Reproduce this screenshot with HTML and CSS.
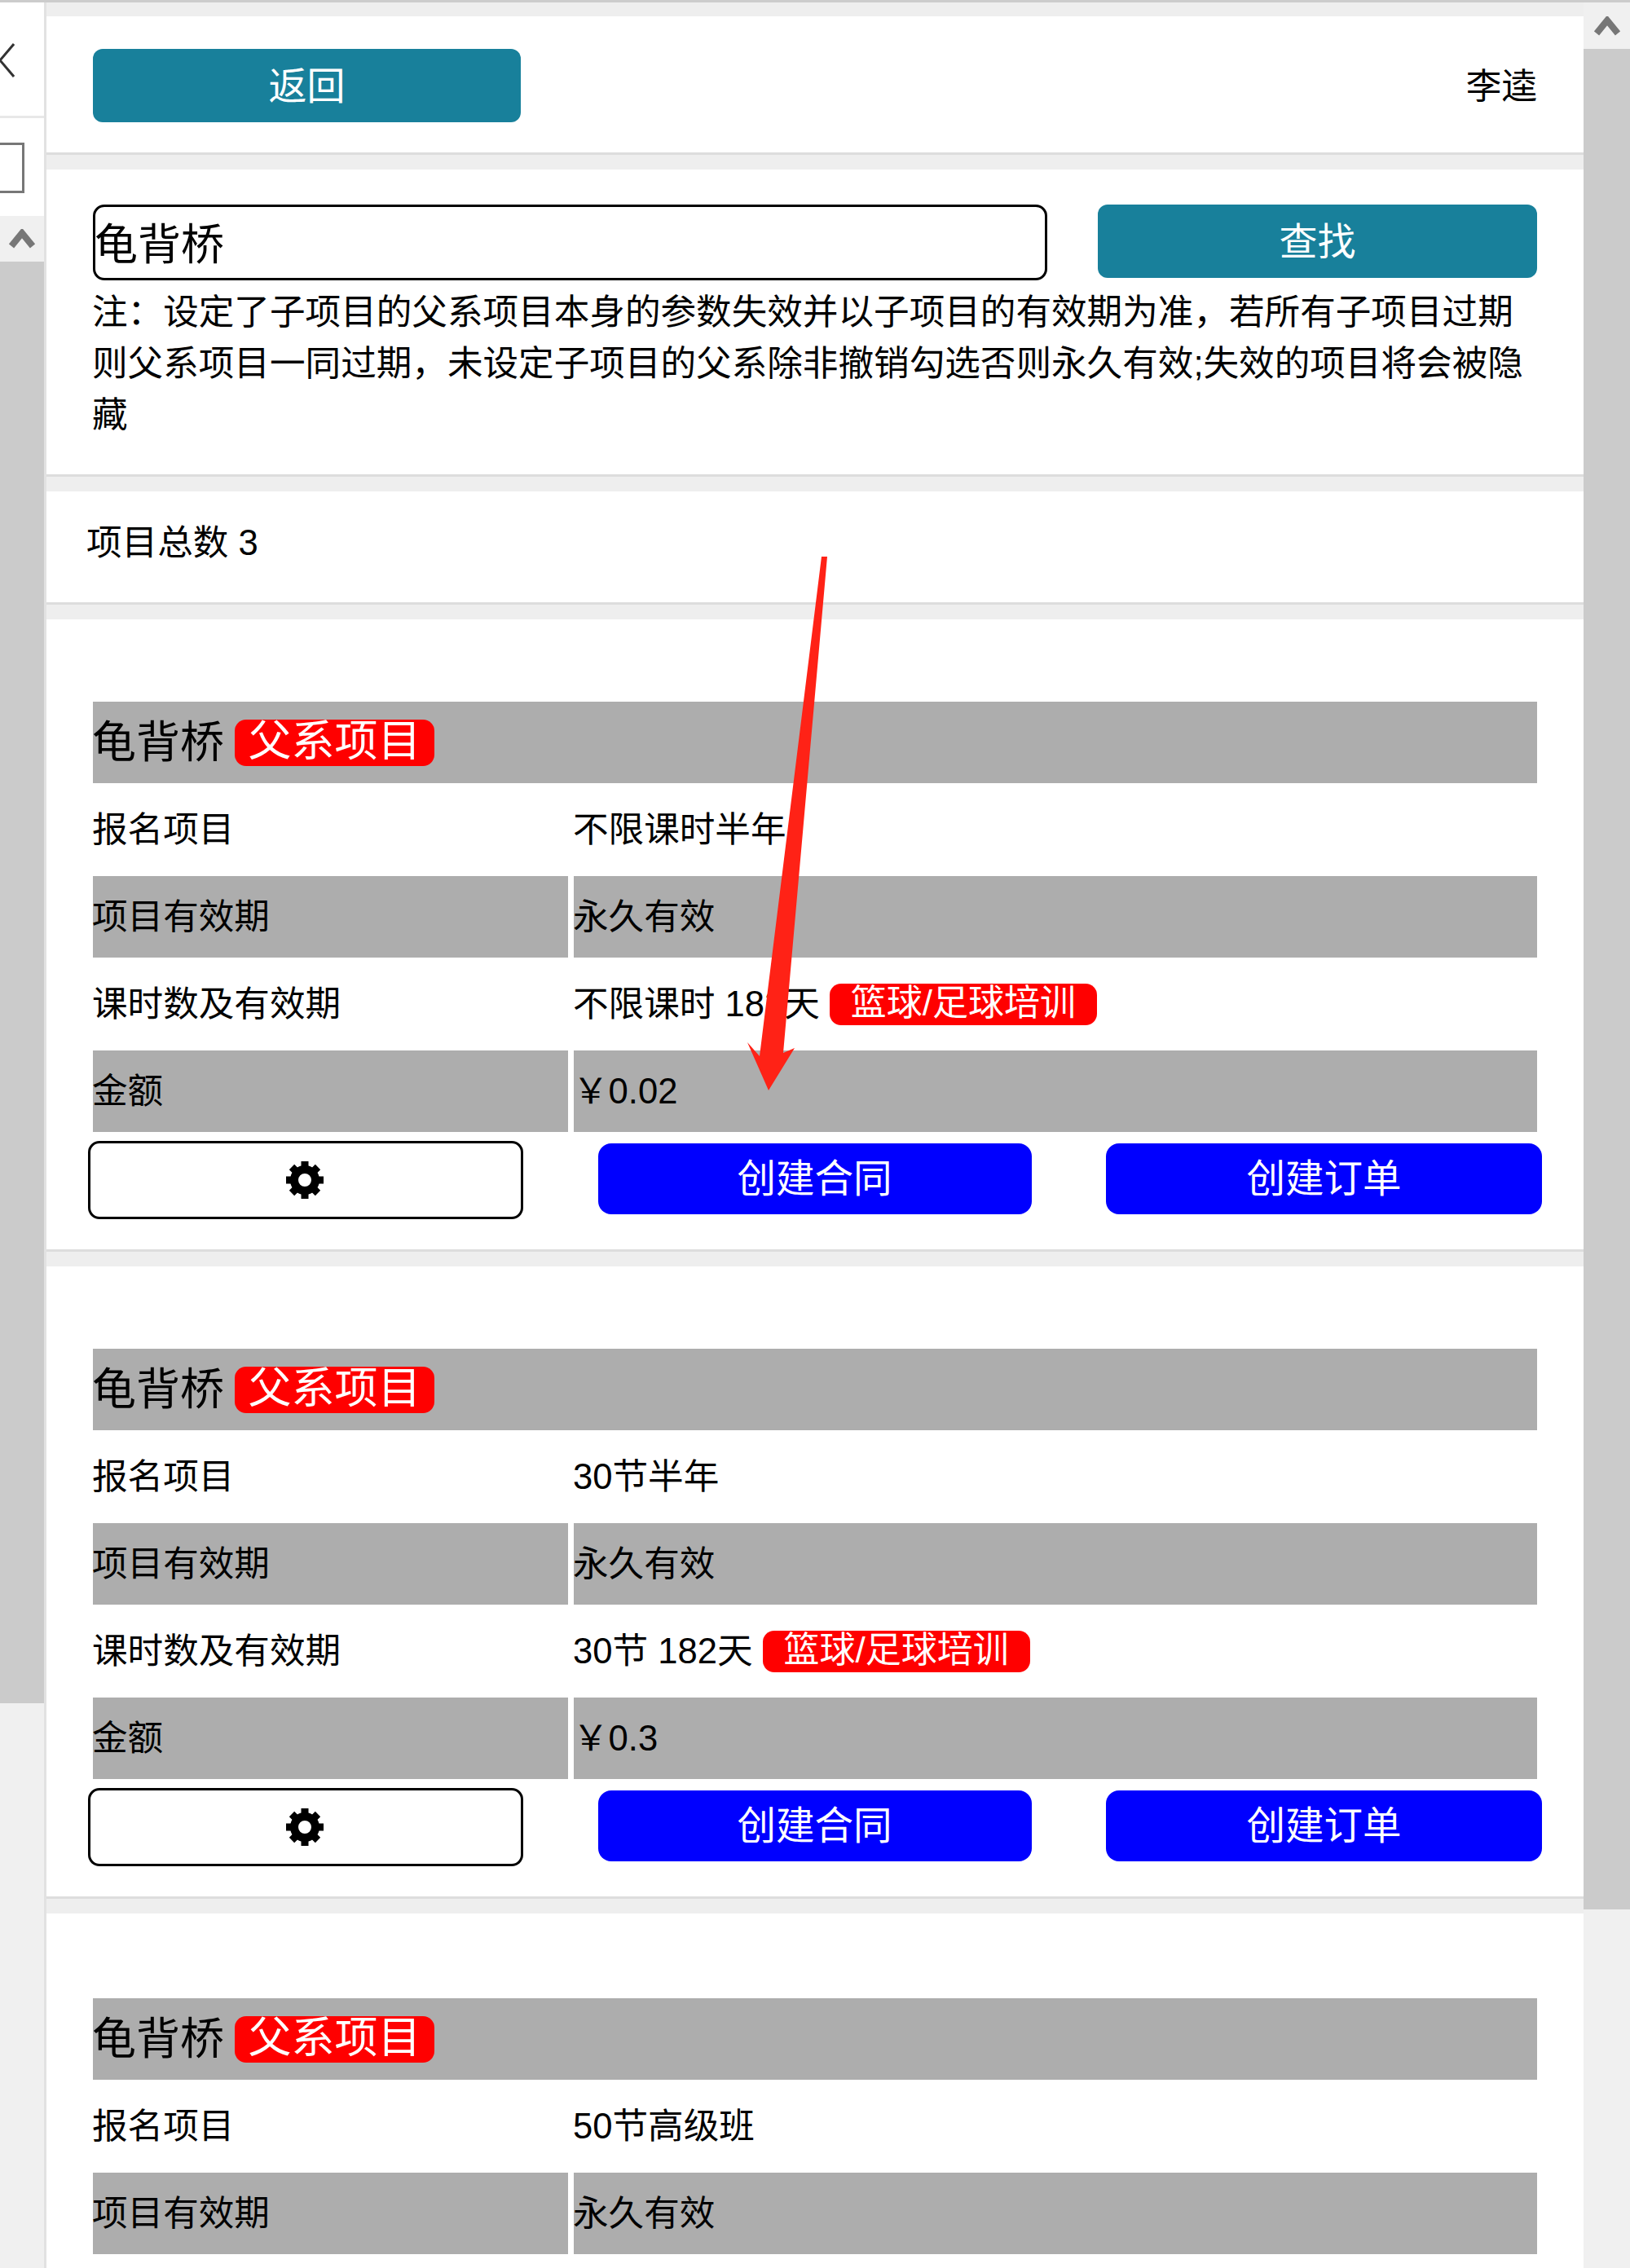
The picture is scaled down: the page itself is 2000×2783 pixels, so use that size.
FILE: index.html
```html
<!DOCTYPE html>
<html lang="zh-CN">
<head>
    <meta charset="UTF-8">
    <meta name="viewport" content="width=device-width, initial-scale=1.0">
    <title>项目列表</title>
    <link rel="stylesheet" href="styles.css">
</head>
<body>
    <div class="top-line"></div>
    <div class="window">
        <div class="side">
            <div class="side-head">
                <svg class="side-back" width="18" height="42" viewBox="0 0 18 42"><path d="M17 1 L0 21 L17 41" fill="none" stroke="#333" stroke-width="3"/></svg>
            </div>
            <div class="side-search"><div class="side-input"></div></div>
            <div class="scrollbar">
                <div class="scroll-up">
                    <svg width="32" height="24" viewBox="0 0 32 24"><path d="M3 21 L16 5 L29 21" fill="none" stroke="#777" stroke-width="8"/></svg>
                </div>
                <div class="scroll-thumb side-thumb"></div>
                <div class="scroll-track"></div>
            </div>
        </div>

        <div class="main">
            <div class="panel header">
                <button class="btn-teal btn-back"><span class="btn-text">返回</span></button>
                <span class="user">李逵</span>
            </div>

            <div class="panel search">
                <div class="search-row">
                    <input class="search-input" type="text" value="龟背桥">
                    <button class="btn-teal btn-find"><span class="btn-text">查找</span></button>
                </div>
                <div class="note">注&#xFF1A;设定了子项目的父系项目本身的参数失效并以子项目的有效期为准&#xFF0C;若所有子项目过期则父系项目一同过期&#xFF0C;未设定子项目的父系除非撤销勾选否则永久有效;失效的项目将会被隐藏</div>
            </div>

            <div class="panel total">项目总数 3</div>

            <div class="panel card">
                <div class="info">
                    <div class="cell title grey">龟背桥 <span class="tag tag-big">父系项目</span></div>
                    <div class="cell">报名项目</div>
                    <div class="cell">不限课时半年</div>
                    <div class="cell grey">项目有效期</div>
                    <div class="cell grey">永久有效</div>
                    <div class="cell">课时数及有效期</div>
                    <div class="cell">不限课时 182天 <span class="tag">篮球/足球培训</span></div>
                    <div class="cell grey">金额</div>
                    <div class="cell grey">&#xFFE5;0.02</div>
                </div>
                <div class="actions">
                    <button class="btn-gear">
                        <svg width="48" height="48" viewBox="-24 -24 48 48"><circle r="13" fill="none" stroke="#000" stroke-width="10"/><path d="M0-23V-14M0 23V14M-23 0H-14M23 0H14M-16-16L-10-10M16 16L10 10M-16 16L-10 10M16-16L10-10" stroke="#000" stroke-width="9"/></svg>
                    </button>
                    <button class="btn-blue btn-contract"><span class="btn-text">创建合同</span></button>
                    <button class="btn-blue btn-order"><span class="btn-text">创建订单</span></button>
                </div>
            </div>

            <div class="panel card">
                <div class="info">
                    <div class="cell title grey">龟背桥 <span class="tag tag-big">父系项目</span></div>
                    <div class="cell">报名项目</div>
                    <div class="cell">30节半年</div>
                    <div class="cell grey">项目有效期</div>
                    <div class="cell grey">永久有效</div>
                    <div class="cell">课时数及有效期</div>
                    <div class="cell">30节 182天 <span class="tag">篮球/足球培训</span></div>
                    <div class="cell grey">金额</div>
                    <div class="cell grey">&#xFFE5;0.3</div>
                </div>
                <div class="actions">
                    <button class="btn-gear">
                        <svg width="48" height="48" viewBox="-24 -24 48 48"><circle r="13" fill="none" stroke="#000" stroke-width="10"/><path d="M0-23V-14M0 23V14M-23 0H-14M23 0H14M-16-16L-10-10M16 16L10 10M-16 16L-10 10M16-16L10-10" stroke="#000" stroke-width="9"/></svg>
                    </button>
                    <button class="btn-blue btn-contract"><span class="btn-text">创建合同</span></button>
                    <button class="btn-blue btn-order"><span class="btn-text">创建订单</span></button>
                </div>
            </div>

            <div class="panel card card-last">
                <div class="info">
                    <div class="cell title grey">龟背桥 <span class="tag tag-big">父系项目</span></div>
                    <div class="cell">报名项目</div>
                    <div class="cell">50节高级班</div>
                    <div class="cell grey">项目有效期</div>
                    <div class="cell grey">永久有效</div>
                </div>
            </div>
        </div>

        <div class="scrollbar page-scroll">
            <div class="scroll-up page-up">
                <svg width="32" height="24" viewBox="0 0 32 24"><path d="M3 21 L16 5 L29 21" fill="none" stroke="#777" stroke-width="8"/></svg>
            </div>
            <div class="scroll-thumb page-thumb"></div>
            <div class="scroll-track"></div>
        </div>
    </div>

    <!-- red annotation arrow drawn over the screenshot -->
    <svg class="arrow" width="2000" height="2783" viewBox="0 0 2000 2783">
        <path d="M1008 683 L1015 683 L961 1292 L975 1286 L943 1338 L917 1279 L932 1296 Z" fill="#ff2216"/>
    </svg>
</body>
</html>
```

FILE: styles.css
```css
* {
    box-sizing: border-box;
}
body {
    margin: 0;
    width: 2000px;
    height: 2783px;
    overflow: hidden;
    position: relative;
    background-color: white;
    color: black;
    font-family: "Liberation Sans", "Noto Sans CJK SC", sans-serif;
    font-size: 43.6px;
}
button, input {
    font-family: inherit;
    cursor: pointer;
}
.top-line {
    height: 3px;
    background-color: #ccc;
}
.window {
    display: flex;
    height: 2780px;
}

/* left sliver of the other window */
.side {
    width: 57px;
    flex-shrink: 0;
    display: flex;
    flex-direction: column;
    border-right: 3px solid #e2e2e2;
    overflow: hidden;
}
.side-head {
    height: 142px;
    padding-top: 50px;
    border-bottom: 3px solid #e8e8e8;
}
.side-back {
    display: block;
}
.side-search {
    height: 120px;
    padding-top: 30px;
}
.side-input {
    width: 30px;
    height: 62px;
    border: 3px solid #777;
    border-left: none;
}
.scrollbar {
    flex: 1;
    display: flex;
    flex-direction: column;
}
.scroll-up {
    height: 56px;
    flex-shrink: 0;
    background-color: #f0f0f0;
    display: flex;
    justify-content: center;
    align-items: center;
}
.scroll-thumb {
    flex-shrink: 0;
    background-color: #cbcbcb;
}
.side-thumb {
    height: 1769px;
}
.scroll-track {
    flex: 1;
    background-color: #f0f0f0;
}

/* main column */
.main {
    flex: 1;
    min-width: 0;
    padding-top: 17px;
    background-color: #eee;
    overflow: hidden;
}
.panel {
    background-color: white;
    border-bottom: 3px solid #ddd;
    margin-bottom: 18px;
}
.header {
    height: 170px;
    padding: 40px 57px 0;
    display: flex;
    justify-content: space-between;
    align-items: flex-start;
}
.btn-teal {
    background-color: #18809b;
    color: white;
    border: none;
    border-radius: 12px;
    font-size: 47px;
}
.btn-text {
    position: relative;
    top: -4px;
}
.btn-back {
    width: 525px;
    height: 90px;
}
.user {
    line-height: 93px;
}
.search {
    height: 377px;
    padding: 43px 57px 0;
}
.search-row {
    display: flex;
    justify-content: space-between;
    align-items: flex-start;
    margin-bottom: 8px;
}
.search-input {
    width: 1171px;
    height: 93px;
    padding: 0 0 3px;
    border: 3px solid black;
    border-radius: 14px;
    font-size: 53px;
    color: black;
    background-color: white;
    text-indent: -1px;
}
.btn-find {
    width: 539px;
    height: 90px;
}
.note {
    margin: 0 -12px 0 -1px;
    line-height: 63px;
}
.total {
    height: 139px;
    padding: 32px 49px 0;
    line-height: 63px;
}
.card {
    height: 776px;
    padding: 101px 57px 0;
}
.card-last {
    padding-top: 104px;
    height: auto;
    padding-bottom: 40px;
}
.info {
    display: grid;
    grid-template-columns: 583px 1182px;
    grid-auto-rows: 100px;
    gap: 7px;
}
.cell {
    display: flex;
    align-items: center;
    padding-bottom: 9px;
    white-space: pre;
    text-indent: -1px;
}
.grey {
    background-color: #adadad;
}
.title {
    grid-column: 1 / 3;
    font-size: 54px;
    padding-bottom: 0;
    line-height: 90px;
}
.tag {
    display: inline-block;
    background-color: red;
    color: white;
    font-size: 44px;
    line-height: 47px;
    height: 51px;
    width: 328px;
    text-align: center;
    text-indent: 0;
    margin: 9px 0 0;
    border-radius: 14px;
}
.tag-big {
    font-size: 53px;
    line-height: 53px;
    height: 57px;
    width: 245px;
    margin: 0 0 0 -2px;
}
.actions {
    display: flex;
    justify-content: space-between;
    align-items: flex-start;
    margin: 11px -6px 0;
}
.btn-gear {
    width: 534px;
    height: 96px;
    background-color: white;
    border: 3px solid black;
    border-radius: 14px;
    display: flex;
    justify-content: center;
    align-items: center;
    padding: 0 2px 0 0;
}
.btn-blue {
    height: 87px;
    margin-top: 3px;
    background-color: #0000ff;
    color: white;
    border: none;
    border-radius: 16px;
    font-size: 47.5px;
}
.btn-contract {
    width: 532px;
}
.btn-order {
    width: 535px;
}

/* right page scrollbar */
.page-scroll {
    width: 57px;
    flex: none;
}
.page-up {
    height: 57px;
}
.page-thumb {
    height: 2283px;
}

.arrow {
    position: absolute;
    left: 0;
    top: 0;
    pointer-events: none;
}
```
